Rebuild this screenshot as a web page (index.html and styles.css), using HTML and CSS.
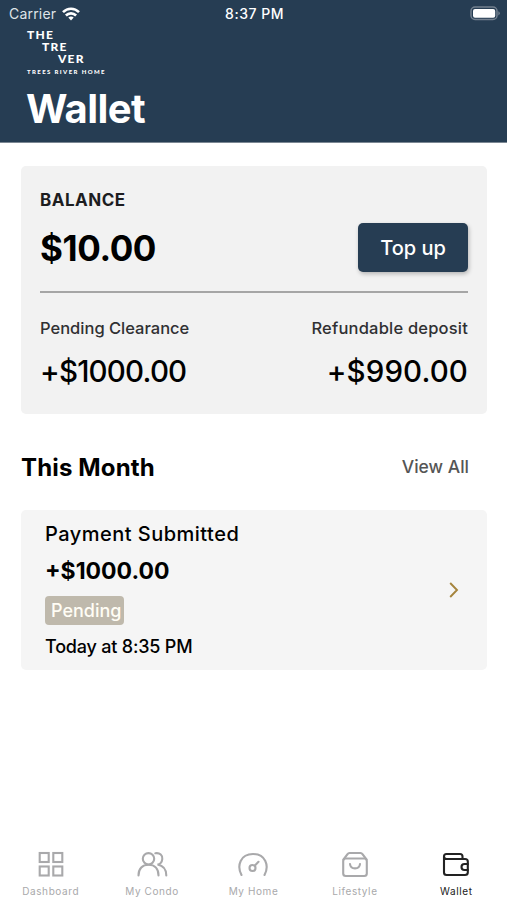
FILE: index.html
```html
<!DOCTYPE html>
<html lang="en">
<head>
    <meta charset="UTF-8">
    <meta name="viewport" content="width=device-width, initial-scale=1.0">
    <title>Wallet</title>
    <link rel="stylesheet" href="styles.css">
</head>
<body>
    <header class="header">
        <div class="status-bar">
            <div class="carrier">
                <span>Carrier</span>
                <svg width="18" height="14" viewBox="0 0 18 14" fill="none" stroke="#fff" stroke-width="2.6">
                    <path d="M1 5.2C5.500.6 12.500.6 17 5.200"/>
                    <path d="M3.900 8.500C6.800 5.600 11.200 5.600 14.100 8.500"/>
                    <path d="M6.300 10.600Q9 8.300 11.700 10.600L9 13.500Z" fill="#fff" stroke="none"/>
                </svg>
            </div>
            <span class="time">8:37 PM</span>
            <svg class="battery" width="30" height="15" viewBox="0 0 30 15">
                <rect x="1" y="1" width="26" height="12.500" rx="4" fill="none" stroke="#73808f" stroke-width="1.500"/>
                <rect x="3" y="3" width="22.200" height="8.700" rx="2" fill="#fff"/>
                <path d="M28.300 5.200Q29.800 5.700 29.800 7.300T28.300 9.400Z" fill="#73808f"/>
            </svg>
        </div>
        <div class="logo">
            <span class="logo-the">THE</span>
            <span class="logo-tre">TRE</span>
            <span class="logo-ver">VER</span>
            <span class="logo-sub">TREES RIVER HOME</span>
        </div>
        <h1>Wallet</h1>
    </header>

    <main>
        <section class="balance-card">
            <div class="balance-top">
                <div>
                    <div class="balance-label">BALANCE</div>
                    <div class="balance-value">$10.00</div>
                </div>
                <button type="button" class="topup">Top up</button>
            </div>
            <div class="balance-bottom">
                <div>
                    <div class="label">Pending Clearance</div>
                    <div class="amount">+$1000.00</div>
                </div>
                <div class="deposit">
                    <div class="label">Refundable deposit</div>
                    <div class="amount">+$990.00</div>
                </div>
            </div>
        </section>

        <div class="section-head">
            <h2>This Month</h2>
            <a class="view-all">View All</a>
        </div>

        <section class="payment">
            <div>
                <div class="payment-title">Payment Submitted</div>
                <div class="payment-amount">+$1000.00</div>
                <div class="badge">Pending</div>
                <div class="payment-date">Today at 8:35 PM</div>
            </div>
            <svg width="10" height="16" viewBox="0 0 10 16" fill="none" stroke="#a5843c" stroke-width="1.900">
                <path d="M1.200 1L8 8L1.200 15"/>
            </svg>
        </section>
    </main>

    <nav class="tabs">
        <a class="tab">
            <svg width="32" height="28" viewBox="0 0 32 28">
                <rect x="4.700" y="3" width="9" height="9"/>
                <rect x="18.300" y="3" width="9" height="9"/>
                <rect x="4.700" y="16.500" width="9" height="9"/>
                <rect x="18.300" y="16.500" width="9" height="9"/>
            </svg>
            <span>Dashboard</span>
        </a>
        <a class="tab">
            <svg width="32" height="28" viewBox="0 0 32 28">
                <circle cx="12.500" cy="8.800" r="5.700"/>
                <path d="M2.500 25.500C2.500 18.500 6.500 14.700 12.500 14.700S22.500 18.500 22.500 25.500"/>
                <path d="M19.300 3.300C24 2.500 26.800 5.500 26.300 9C26 11.800 24 14.200 21.500 14.500C27 15.500 30.300 19.500 30.300 25.500"/>
            </svg>
            <span>My Condo</span>
        </a>
        <a class="tab">
            <svg width="32" height="28" viewBox="0 0 32 28">
                <path d="M4.500 25C-.5 15.500 3.500 4 16 4S32.500 15.500 27.500 25"/>
                <circle cx="15.500" cy="18" r="3"/>
                <path d="M17.700 15.700L21.500 11.800"/>
            </svg>
            <span>My Home</span>
        </a>
        <a class="tab">
            <svg width="32" height="28" viewBox="0 0 32 28">
                <rect x="4.200" y="8.500" width="23.600" height="17.500" rx="2.500"/>
                <path d="M4.500 9.500L8.500 4.200Q9.200 3 10.500 3H21.500Q22.800 3 23.500 4.200L27.500 9.500"/>
                <path d="M11 14C11.500 19.800 20.500 19.800 21 14"/>
            </svg>
            <span>Lifestyle</span>
        </a>
        <a class="tab active">
            <svg width="32" height="28" viewBox="0 0 32 28">
                <path d="M22.500 9V6.500Q22.500 4 20 4H6.500Q4 4 4 6.500V22.500Q4 25 6.500 25H25Q27.800 25 27.800 22.500V11.500Q27.800 9 25 9H6.500Q4 9 4 6.500"/>
                <path d="M27.800 14H24.500Q21.500 14 21.500 17T24.500 20H27.800"/>
            </svg>
            <span>Wallet</span>
        </a>
    </nav>
</body>
</html>
```

FILE: styles.css
```css
* {
    box-sizing: border-box;
}
body {
    margin: 0;
    height: 900px;
    display: flex;
    flex-direction: column;
    font-family: Inter, sans-serif;
    background-color: #fff;
    color: #000;
}

/* header */
.header {
    height: 143px;
    background-color: #263d53;
    border-bottom: 1px solid #7b8793;
    color: #fff;
}
.status-bar {
    height: 27px;
    padding: 0 7px 0 9px;
    display: grid;
    grid-template-columns: 1fr auto 1fr;
    align-items: center;
    font-size: 14px;
}
.carrier {
    display: flex;
    align-items: center;
    gap: 6px;
    letter-spacing: 0.2px;
    color: #dfe4e8;
}
.time {
    font-weight: 500;
    letter-spacing: 0.5px;
}
.battery {
    justify-self: end;
}
.logo {
    height: 49px;
    padding: 2px 0 0 27px;
    display: flex;
    flex-direction: column;
    font-family: Lato, sans-serif;
    font-weight: 900;
    font-size: 12px;
    line-height: 12px;
    letter-spacing: 1.2px;
}
.logo-tre {
    padding-left: 15px;
}
.logo-ver {
    padding-left: 31px;
}
.logo-sub {
    margin-top: 1px;
    font-size: 6px;
    letter-spacing: 1.4px;
}
h1 {
    margin: 8px 0 0 26px;
    font-size: 40px;
    line-height: 50px;
    letter-spacing: -0.6px;
}

/* balance */
main {
    flex: 1;
    padding: 23px 20px 0 21px;
}
.balance-card {
    height: 248px;
    padding: 0 19px;
    border-radius: 5px;
    background-color: #f2f2f2;
}
.balance-top {
    height: 127px;
    display: flex;
    justify-content: space-between;
    border-bottom: 2px solid #a6a6a6;
}
.balance-label {
    margin-top: 22px;
    font-size: 17px;
    font-weight: 700;
    line-height: 24px;
    letter-spacing: 0.5px;
    color: #1d1d1f;
}
.balance-value {
    margin-top: 14px;
    font-size: 35px;
    font-weight: 700;
    line-height: 44px;
    letter-spacing: -0.4px;
}
.topup {
    width: 110px;
    height: 49px;
    margin-top: 57px;
    padding: 0;
    border: none;
    border-radius: 5px;
    background-color: #263d53;
    box-shadow: 1px 2px 4px rgba(0, 0, 0, 0.25);
    color: #fff;
    font-family: inherit;
    font-size: 20px;
    font-weight: 500;
}
.balance-bottom {
    padding-top: 23px;
    display: flex;
    justify-content: space-between;
}
.label {
    font-size: 16.5px;
    font-weight: 500;
    line-height: 24px;
    color: #303032;
}
.deposit .label {
    letter-spacing: 0.2px;
}
.amount {
    margin-top: 11px;
    font-size: 29.5px;
    font-weight: 500;
    line-height: 40px;
    letter-spacing: -0.8px;
}
.deposit {
    text-align: right;
}
.deposit .amount {
    letter-spacing: 0.1px;
}

/* history */
.section-head {
    height: 96px;
    padding: 38px 18px 0 0;
    display: flex;
    justify-content: space-between;
}
h2 {
    margin: 0;
    font-size: 24px;
    font-weight: 700;
    line-height: 32px;
    letter-spacing: 0.15px;
}
.view-all {
    font-size: 17.5px;
    font-weight: 500;
    line-height: 29px;
    color: #555;
}
.payment {
    height: 160px;
    padding: 0 28px 0 24px;
    display: flex;
    align-items: center;
    justify-content: space-between;
    border-radius: 5px;
    background-color: #f5f5f5;
}
.payment-title {
    font-size: 20px;
    font-weight: 500;
    line-height: 30px;
    letter-spacing: 0.48px;
}
.payment-amount {
    margin-top: 7px;
    font-size: 23px;
    font-weight: 700;
    line-height: 30px;
}
.badge {
    width: 79px;
    height: 29px;
    margin-top: 10px;
    padding-left: 6px;
    border-radius: 4px;
    background-color: #bfb9ac;
    color: #fffdf5;
    font-size: 18px;
    font-weight: 500;
    line-height: 29px;
}
.payment-date {
    margin-top: 9px;
    padding-bottom: 1px;
    font-size: 18px;
    font-weight: 500;
    line-height: 26px;
    letter-spacing: -0.2px;
}

/* bottom tabs */
.tabs {
    height: 50px;
    display: grid;
    grid-template-columns: repeat(5, 1fr);
}
.tab {
    display: flex;
    flex-direction: column;
    align-items: center;
    color: #a9a9ab;
    font-size: 10px;
    line-height: 14px;
    letter-spacing: 0.6px;
}
.tab svg {
    margin-bottom: 6px;
    fill: none;
    stroke: currentColor;
    stroke-width: 2.1;
    stroke-linecap: round;
}
.tab.active {
    color: #222;
}
```
